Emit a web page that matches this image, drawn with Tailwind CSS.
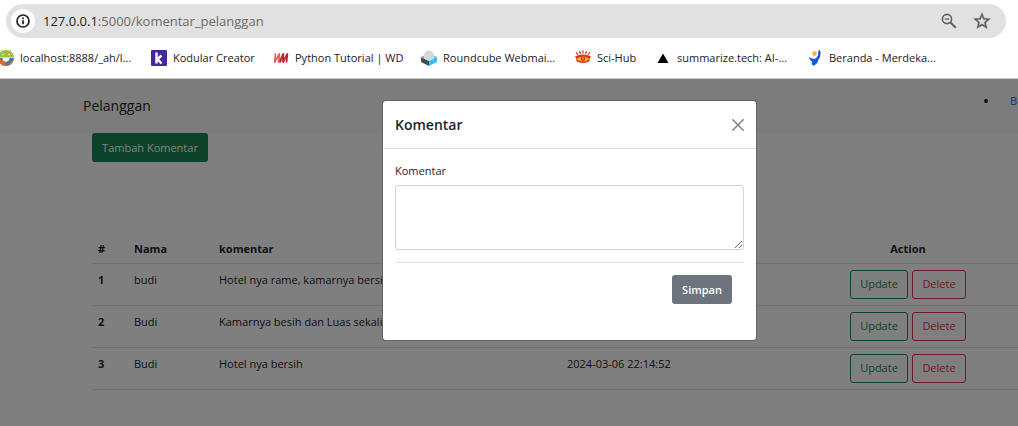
<!DOCTYPE html>
<html lang="id">
<head>
<meta charset="utf-8">
<meta name="viewport" content="width=device-width, initial-scale=1">
<title>Komentar Pelanggan</title>
<script src="https://cdn.jsdelivr.net/npm/@tailwindcss/browser@4"></script>
</head>
<body class="flex min-h-screen flex-col overflow-x-hidden bg-white font-['Open_Sans','Noto_Sans',sans-serif] text-[11px] leading-4 text-[#212529]">

<!-- Browser bar -->
<header class="border-b border-[#c8c8c8] pt-1">
  <div class="mr-3 ml-1.5 flex h-[34px] items-center rounded-full bg-[#e1e1e1] pr-3.5 pl-[5px]">
    <button type="button" aria-label="Informasi situs" class="flex size-6 items-center justify-center rounded-full bg-white">
      <svg class="size-4" viewBox="0 0 16 16" fill="none" stroke="#1f1f1f" stroke-width="1.7"><circle cx="8" cy="8" r="6"/><path d="M8 7.2v4M8 4.6v1.6"/></svg>
    </button>
    <p class="ml-2 flex-1 text-[13px] text-[#6a6a6a]"><span class="text-[#202124]">127.0.0.1</span>:5000/komentar_pelanggan</p>
    <button type="button" aria-label="Zoom" class="mr-3.5">
      <svg class="size-[18px]" viewBox="0 0 18 18" fill="none" stroke="#5f6063"><circle cx="7" cy="7" r="4.6" stroke-width="1.6"/><path d="M4.800 7h4.400" stroke-width="1.3"/><path d="M10.400 10.400l5.400 5.400" stroke-width="2"/></svg>
    </button>
    <button type="button" aria-label="Tandai">
      <svg class="size-5" viewBox="0 0 24 24" fill="#5f6063" stroke="#5f6063" stroke-width=".5"><path d="M22 9.24l-7.19-.62L12 2 9.19 8.63 2 9.24l5.46 4.73L5.82 21 12 17.27 18.18 21l-1.63-7.03L22 9.24zM12 15.4l-3.76 2.27 1-4.28-3.32-2.88 4.38-.38L12 6.1l1.71 4.04 4.38.38-3.32 2.88 1 4.28L12 15.4z"/></svg>
    </button>
  </div>
  <nav class="flex h-10 items-center whitespace-nowrap text-[#202124]">
    <a href="#" class="-ml-0.5 flex w-[153px] items-center gap-1.5">
      <svg class="size-4 shrink-0" viewBox="0 0 16 16"><path d="M0 7.500a8 7.500 0 0 1 16 0z" fill="#9fbf3b"/><path d="M3 0l2 2.500M13 0l-2 2.500" stroke="#9fbf3b"/><circle cx="5" cy="4.500" r=".8" fill="#fff"/><circle cx="11" cy="4.500" r=".8" fill="#fff"/><path d="M0 8h16a8 8 0 0 1-16 0z" fill="#2f7fc0"/><path d="M0 9l7 1.500 1 5.500A8 8 0 0 1 0 9z" fill="#f1641e"/><path d="M4.500 8h7l-.5 2.500-3 1.500-3-1.500z" fill="#f4f4f4"/><path d="M11 13l4.500-3a8 8 0 0 1-5 5.500z" fill="#f1641e"/></svg>
      localhost:8888/_ah/l...
    </a>
    <a href="#" class="flex w-[122px] items-center gap-1.5">
      <svg class="size-4 shrink-0" viewBox="0 0 16 16"><rect width="16" height="16" rx="1" fill="#4527a0"/><path d="M5.500 2.500v11M10.500 5.500L6.500 9l4 4.500" fill="none" stroke="#fff" stroke-width="2.400"/></svg>
      Kodular Creator
    </a>
    <a href="#" class="flex w-[148px] items-center gap-1.5">
      <svg class="size-4 shrink-0" viewBox="0 0 16 16" fill="none"><path d="M2.500 3.500L1.500 12.500L6.500 3.500L5.500 12.500L10.500 3.500" stroke="#dc6262" stroke-width="1.700"/><path d="M7 12.500L10.500 3.500L10 12.500L14.500 3.500L13.500 12.500" stroke="#c0222b" stroke-width="1.700"/></svg>
      Python Tutorial | WD
    </a>
    <a href="#" class="flex w-[154px] items-center gap-1.5">
      <svg class="size-4 shrink-0" viewBox="0 0 16 16"><path d="M0 7l8 4v5l-8-4z" fill="#404f54"/><path d="M16 7l-8 4v5l8-4z" fill="#37beff"/><path d="M0 7l8-4 8 4-8 4z" fill="#9aa7ab"/><path d="M3 5.500a5 5 0 0 1 10 0v3L8 11 3 8.500z" fill="#d4dadc"/></svg>
      Roundcube Webmai...
    </a>
    <a href="#" class="flex w-20 items-center gap-1.5">
      <svg class="size-4 shrink-0" viewBox="0 0 16 16"><path d="M1 2l2 3M4.500 1l1 3M8 .5v3M11.500 1l-1 3M15 2l-2 3" stroke="#d32f1e" stroke-width="1.200"/><path d="M0 6.500q8-4 16 0l-1.500 2.500q1 2-1.500 3-5 2-10 0-2.500-1-1.500-3z" fill="#d9381e"/><path d="M1.500 9q6.500-5 13 0-6.500 5-13 0z" fill="#ffb81a"/><circle cx="8" cy="8.800" r="2.200" fill="#c8301a"/><circle cx="8" cy="8.500" r=".9" fill="#ffc21a"/></svg>
      Sci-Hub
    </a>
    <a href="#" class="flex w-[152px] items-center gap-1.5">
      <svg class="size-4 shrink-0" viewBox="0 0 16 16"><path d="M8 3.500l5.500 9.500h-11z" fill="#000"/></svg>
      summarize.tech: AI-...
    </a>
    <a href="#" class="flex items-center gap-1.5">
      <svg class="size-4 shrink-0" viewBox="0 0 16 16"><path d="M2 7l4 2q3.500 0 5-3.500L11.500.3h1.500q1.500 3 0 6.700l-2 3.500q-.5 3.500-4.500 5.200Q4 14.500 5 11.500 2.500 10 2 7z" fill="#1157d8"/><circle cx="7.500" cy="3.600" r="2.300" fill="#f6b53c"/></svg>
      Beranda - Merdeka...
    </a>
  </nav>
</header>

<div class="relative flex-1 overflow-hidden">
  <!-- Page under the backdrop -->
  <div class="flex h-[54px] items-center justify-between bg-[#f8f9fa] pl-[83px]">
    <a href="#" class="text-sm text-black/90">Pelanggan</a>
    <ul class="mb-2.5 flex items-center gap-[22px]">
      <li class="flex items-center gap-[22px]"><span class="size-1 rounded-full bg-[#212529]"></span><a href="#" class="pr-px text-[#0d6efd]">B</a></li>
    </ul>
  </div>
  <div class="pl-[92px]">
    <button type="button" class="h-[29px] w-[116px] rounded-[3px] bg-[#198754] whitespace-nowrap text-white">Tambah Komentar</button>
    <table class="mt-[73px] w-full table-fixed border-collapse text-left">
      <colgroup><col class="w-9"><col class="w-[85px]"><col class="w-[348px]"><col><col class="w-[220px]"></colgroup>
      <thead>
        <tr class="h-7 border-b border-[#dee2e6]">
          <th class="px-1.5">#</th><th class="px-1.5">Nama</th><th class="px-1.5">komentar</th><th></th><th class="text-center">Action</th>
        </tr>
      </thead>
      <tbody>
        <tr class="h-[42px] border-b border-[#dee2e6] align-top">
          <th class="px-1.5 pt-2">1</th><td class="px-1.5 pt-2">budi</td><td class="px-1.5 pt-2">Hotel nya rame, kamarnya bersih</td><td></td>
          <td class="pt-1.5"><div class="flex justify-center gap-1"><button type="button" class="h-[29px] w-[58px] rounded-[3px] border border-[#198754] text-[#198754]">Update</button><button type="button" class="h-[29px] w-[54px] rounded-[3px] border border-[#dc3545] text-[#dc3545]">Delete</button></div></td>
        </tr>
        <tr class="h-[42px] border-b border-[#dee2e6] align-top">
          <th class="px-1.5 pt-2">2</th><td class="px-1.5 pt-2">Budi</td><td class="px-1.5 pt-2">Kamarnya besih dan Luas sekali</td><td></td>
          <td class="pt-1.5"><div class="flex justify-center gap-1"><button type="button" class="h-[29px] w-[58px] rounded-[3px] border border-[#198754] text-[#198754]">Update</button><button type="button" class="h-[29px] w-[54px] rounded-[3px] border border-[#dc3545] text-[#dc3545]">Delete</button></div></td>
        </tr>
        <tr class="h-[42px] border-b border-[#dee2e6] align-top">
          <th class="px-1.5 pt-2">3</th><td class="px-1.5 pt-2">Budi</td><td class="px-1.5 pt-2">Hotel nya bersih</td><td class="px-1.5 pt-2">2024-03-06 22:14:52</td>
          <td class="pt-1.5"><div class="flex justify-center gap-1"><button type="button" class="h-[29px] w-[58px] rounded-[3px] border border-[#198754] text-[#198754]">Update</button><button type="button" class="h-[29px] w-[54px] rounded-[3px] border border-[#dc3545] text-[#dc3545]">Delete</button></div></td>
        </tr>
      </tbody>
    </table>
  </div>

  <!-- Modal -->
  <div class="absolute inset-0 flex items-start bg-black/50 pt-[21px] pl-[382px]">
    <section role="dialog" aria-labelledby="modal-title" class="w-[375px] rounded-[4px] border border-black/20 bg-white bg-clip-padding">
      <div class="flex h-12 items-center justify-between border-b border-[#dee2e6] px-3">
        <h5 id="modal-title" class="text-sm font-semibold">Komentar</h5>
        <button type="button" aria-label="Tutup"><svg class="size-3" viewBox="0 0 12 12" stroke="#7f7f7f" stroke-width="1.500" stroke-linecap="round"><path d="M.8.8l10.400 10.400M11.200.8L.8 11.200"/></svg></button>
      </div>
      <form class="px-3 pt-3.5 pb-9">
        <label for="komentar" class="mb-1.5 block">Komentar</label>
        <textarea id="komentar" class="block h-[65px] w-full resize-y rounded-[3px] border border-[#ced4da] px-2 py-1"></textarea>
        <div class="mt-3 flex justify-end border-t border-[#dee2e6] px-3 pt-3">
          <button type="button" class="h-[29px] w-[60px] rounded-[3px] bg-[#6c757d] font-semibold text-white">Simpan</button>
        </div>
      </form>
    </section>
  </div>
</div>
</body>
</html>
